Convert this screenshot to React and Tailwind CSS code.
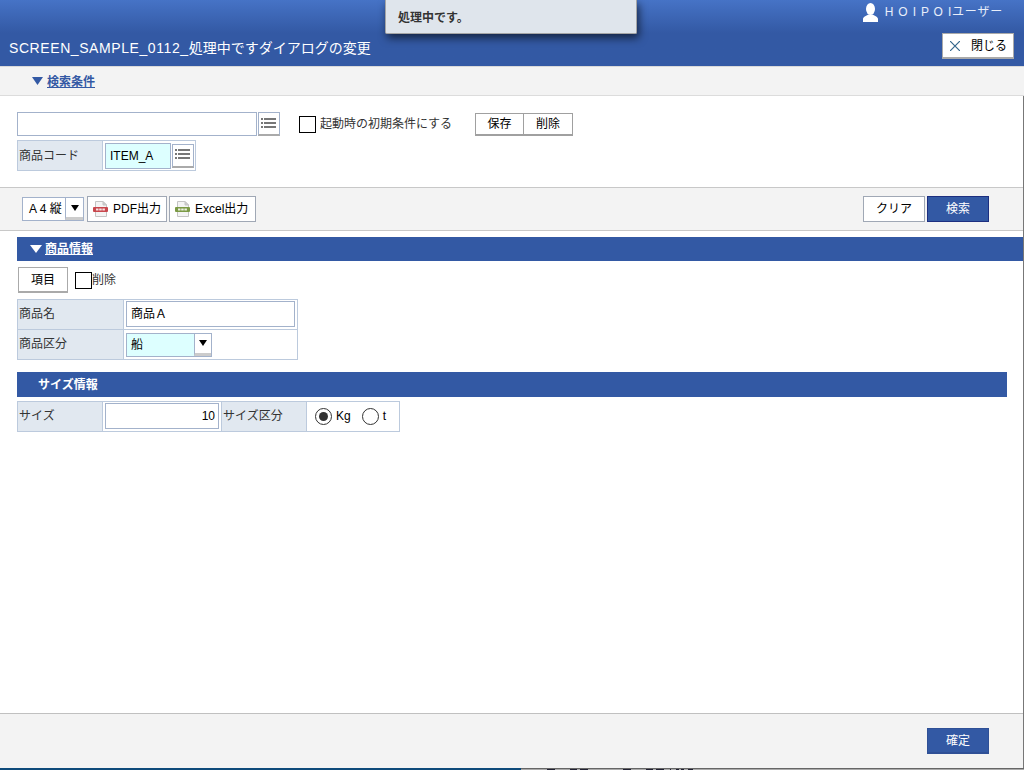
const FONT = "font-['Liberation_Sans','Noto_Sans_CJK_JP',sans-serif]";

const ListIcon = () => (
  <svg width="16" height="12" viewBox="0 0 16 12" fill="#777">
    <rect x="0" y="0" width="2" height="2" />
    <rect x="3" y="0" width="12" height="2" />
    <rect x="0" y="4" width="2" height="2" />
    <rect x="3" y="4" width="12" height="2" />
    <rect x="0" y="8" width="2" height="2" />
    <rect x="3" y="8" width="12" height="2" />
  </svg>
);

const ListButton = ({ className }) => (
  <button className={`flex items-center justify-center bg-white border border-[#a3b2cb] border-b-[#aaa] border-b-2 ${className}`}>
    <ListIcon />
  </button>
);

const FileIcon = ({ color }) => (
  <svg width="15" height="16" viewBox="0 0 15 16">
    <path d="M2.500 .5H10L13.500 4V15.500H2.500Z" fill="#f4f4f4" stroke="#c4c4c4" />
    <path d="M10 .5V4H13.500Z" fill="#ccc" stroke="#c4c4c4" />
    <rect x="0" y="6" width="15" height="5" rx="1" fill={color} />
    <rect x="3" y="7.500" width="2.500" height="2" fill="#fff" opacity=".85" />
    <rect x="6.200" y="7.500" width="2.500" height="2" fill="#fff" opacity=".85" />
    <rect x="9.400" y="7.500" width="2.500" height="2" fill="#fff" opacity=".85" />
  </svg>
);

const Arrow = ({ color = "#000", w = 8, h = 6 }) => (
  <svg width={w} height={h} viewBox="0 0 10 7" preserveAspectRatio="none" fill={color}>
    <path d="M0 0H10L5 7Z" />
  </svg>
);

const Radio = ({ checked }) => (
  <span className="w-[17px] h-[17px] rounded-full border border-[#333] bg-white flex items-center justify-center">
    {checked && <span className="w-[9px] h-[9px] rounded-full bg-[#333]" />}
  </span>
);

// 画面下に透けて見える背後のウィンドウの端
const BACK_MARKS = [[35, 8], [58, 7], [68, 8], [111, 8], [134, 7], [144, 8], [158, 1], [164, 3], [169, 3], [176, 5]];

const labelCell = "bg-[#e1e8f0] border border-[#bccadd] pl-[1px] flex items-center text-[#333]";
const valueCell = "border-y border-r border-[#bccadd] flex items-center bg-white";

const App = () => {
  return (
    <div className={`${FONT} relative w-[1024px] h-[770px] bg-white flex flex-col overflow-hidden text-[12px] text-black`}>
      {/* ヘッダー */}
      <header className="h-[67px] shrink-0 border-b border-[#d9d9d9] bg-gradient-to-b from-[#4673c6] via-[#3359a4] via-50% to-[#3359a4] flex flex-col text-white">
        <div className="h-[33px] flex justify-end pt-[3px] pr-[21px] gap-[7px]">
          <svg width="15" height="19" viewBox="0 0 15 19" fill="#fff">
            <ellipse cx="7.500" cy="6" rx="4.500" ry="6" />
            <path d="M0 19V16C0 14 3 13 5.500 11.500H9.500C12 13 15 14 15 16V19Z" />
          </svg>
          <span className="text-[12px] leading-[18px] tracking-[0.8px] text-[#e8eefa]">H O I P O Iユーザー</span>
        </div>
        <div className="flex items-start justify-between pl-[9px] pr-[10px]">
          <h1 className="text-[14px] leading-[36px] pt-[1px] font-normal">
            <span className="tracking-[0.58px]">SCREEN_SAMPLE_0112_</span>処理中ですダイアログの変更
          </h1>
          <button className="w-[72px] h-[26px] mt-[4px] bg-white border border-[#aaa] border-b-2 flex items-center pl-[7px] gap-[11px] text-black text-[12px]">
            <svg width="10" height="10" viewBox="0 0 10 10" stroke="#33668c" strokeWidth="1.2">
              <path d="M0 0L10 10M10 0L0 10" />
            </svg>
            閉じる
          </button>
        </div>
      </header>

      {/* 検索条件 */}
      <div className="h-[29px] shrink-0 bg-[#f3f3f3] border-b border-[#dcdcdc] pl-[32px] flex items-center gap-[4px]">
        <Arrow color="#3359a4" w={11} h={8} />
        <a className="text-[12px] leading-[18px] pt-[1px] font-bold underline text-[#3359a4]">検索条件</a>
      </div>

      <div className="flex-1 min-h-0 flex flex-col border-r border-[#777]">
        <section className="h-[92px] shrink-0 pl-[17px] pt-[16px] flex flex-col gap-[4px] border-b border-[#c8c8c8]">
          <div className="flex items-center h-[24px]">
            <div className="w-[240px] h-[24px] border border-[#a3b2cb] bg-white" />
            <ListButton className="w-[22px] h-[24px] ml-[1px]" />
            <span className="w-[17px] h-[17px] border border-black bg-white ml-[19px]" />
            <span className="ml-[4px] text-[#333]">起動時の初期条件にする</span>
            <div className="flex ml-[23px] h-[23px] border border-[#a0a0a0] border-b-2 bg-white">
              <button className="w-[48px] border-r border-[#a0a0a0]">保存</button>
              <button className="w-[48px]">削除</button>
            </div>
          </div>
          <div className="flex h-[31px]">
            <div className={`${labelCell} w-[86px]`}>商品コード</div>
            <div className={`${valueCell} w-[93px] pl-[2px] gap-[1px]`}>
              <div className="w-[66px] h-[26px] bg-[#ddffff] border border-[#a3b2cb] flex items-center pl-[4px]">ITEM_A</div>
              <ListButton className="w-[22px] h-[24px]" />
            </div>
          </div>
        </section>

        {/* ツールバー */}
        <div className="h-[43px] shrink-0 bg-[#f3f3f3] border-b border-[#c8c8c8] pl-[22px] pr-[34px] flex items-center">
          <div className="flex h-[24px] w-[62px] border border-[#a3b2cb] bg-white">
            <span className="w-[43px] pl-[6px] leading-[22px] whitespace-nowrap">A 4 縦</span>
            <span className="w-[18px] border-l border-[#a3b2cb] border-b-[3px] border-b-[#ccc] bg-white flex items-center justify-center"><Arrow /></span>
          </div>
          <button className="ml-[3px] w-[80px] h-[26px] bg-white border border-[#a0a8b5] flex items-center pl-[5px] gap-[5px]">
            <FileIcon color="#c8474d" />PDF出力
          </button>
          <button className="ml-[2px] w-[87px] h-[26px] bg-white border border-[#a0a8b5] flex items-center pl-[5px] gap-[5px]">
            <FileIcon color="#7b9a45" />Excel出力
          </button>
          <div className="ml-auto flex gap-[2px]">
            <button className="w-[62px] h-[26px] bg-white border border-[#a0a8b5]">クリア</button>
            <button className="w-[62px] h-[26px] bg-[#3359a4] border border-[#1d2f80] text-white">検索</button>
          </div>
        </div>

        {/* 商品情報 */}
        <main className="flex-1 pl-[17px] pt-[6px]">
          <div className="h-[24px] bg-[#3359a4] pl-[13px] flex items-center gap-[3px] text-white">
            <Arrow color="#fff" w={12} h={8} />
            <a className="font-bold underline">商品情報</a>
          </div>
          <div className="flex items-center h-[26px] mt-[6px] pl-[1px]">
            <button className="w-[50px] h-[26px] bg-white border border-[#aaa] border-b-2">項目</button>
            <span className="w-[17px] h-[17px] border border-black bg-white ml-[7px]" />
            <span className="text-[#333]">削除</span>
          </div>
          <div className="mt-[6px] w-[281px]">
            <div className="flex h-[31px]">
              <div className={`${labelCell} w-[107px] pb-[1px]`}>商品名</div>
              <div className={`${valueCell} flex-1 pl-[2px] pb-[1px]`}>
                <div className="w-[169px] h-[26px] border border-[#a3b2cb] bg-white flex items-center pl-[4px]">商品Ａ</div>
              </div>
            </div>
            <div className="flex h-[30px]">
              <div className={`${labelCell} w-[107px] border-t-0 pb-[1px]`}>商品区分</div>
              <div className={`${valueCell} flex-1 pl-[2px] border-t-0`}>
                <div className="w-[86px] h-[24px] border border-[#a3b2cb] flex">
                  <span className="w-[67px] bg-[#ddffff] flex items-center pl-[4px]">船</span>
                  <span className="flex-1 bg-white border-l border-[#a3b2cb] border-b-[3px] border-b-[#ccc] flex items-center justify-center"><Arrow /></span>
                </div>
              </div>
            </div>
          </div>

          <div className="mt-[12px] mr-[16px] h-[25px] bg-[#3359a4] pl-[21px] flex items-center text-white font-bold">サイズ情報</div>
          <div className="mt-[4px] flex h-[31px] w-[383px]">
            <div className={`${labelCell} w-[86px] pb-[1px]`}>サイズ</div>
            <div className={`${valueCell} w-[119px] pl-[2px] pb-[1px]`}>
              <div className="w-[114px] h-[26px] border border-[#a3b2cb] bg-white flex items-center justify-end pr-[3px]">10</div>
            </div>
            <div className={`${labelCell} w-[85px] border-l-0 pb-[1px]`}>サイズ区分</div>
            <div className={`${valueCell} flex-1 pl-[8px] pb-[1px]`}>
              <Radio checked />
              <span className="ml-[4px]">Kg</span>
              <span className="ml-[11px]"><Radio /></span>
              <span className="ml-[4px]">t</span>
            </div>
          </div>
        </main>

        {/* フッター */}
        <footer className="h-[55px] shrink-0 bg-[#f3f3f3] border-t border-[#c0c0c0] flex items-start justify-end pt-[14px] pr-[34px]">
          <button className="w-[62px] h-[26px] bg-[#3359a4] border border-[#2f5096] border-b-2 text-white">確定</button>
        </footer>
      </div>

      {/* 背後のウィンドウの端 */}
      <div className="h-[2px] shrink-0 flex">
        <div className="w-[521px] bg-[#0e4a7a]" />
        <svg width="503" height="2" className="block">
          <rect width="503" height="2" fill="#aaa" />
          <rect width="503" height="1" fill="#666" />
          {BACK_MARKS.map(([x, w]) => (
            <rect key={x} x={x - 9} y="1" width={w} height="1" fill="#223" />
          ))}
        </svg>
      </div>

      {/* 処理中トースト */}
      <div className="absolute left-[385px] top-0 w-[252px] h-[34px] bg-[#dfe5ec] border border-[#a5a5a5] border-t-0 rounded-b-[2px] shadow-[2px_4px_8px_rgba(0,0,0,0.6)] pl-[12px] pt-[10px] text-[12px] leading-[16px] font-bold text-[#333]">
        処理中です。
      </div>
    </div>
  );
};

export default App;
